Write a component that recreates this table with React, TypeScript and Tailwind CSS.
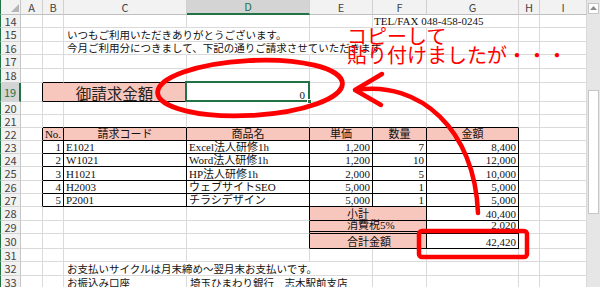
import React from 'react';

// Excel sheet: columns (row header, A..I) and rows (col header, 14..33)
const LETTERS = ['A', 'B', 'C', 'D', 'E', 'F', 'G', 'H', 'I'];

const PINK = 'bg-[#f7c6bd]';
const SERIF = "font-['Liberation_Serif','Noto_Sans_CJK_JP',serif] text-[11px] leading-[12px]";
const GOTH = 'text-[10.5px] leading-[12px] pl-[3px]';

const GR = 'border-r border-r-[#dadada]';
const GB = 'border-b border-b-[#dadada]';
const KR = 'border-r border-r-black';
const KB = 'border-b border-b-black';
const NR = 'border-r border-r-transparent';

type Spec = { t?: React.ReactNode; r?: string; b?: string; x?: string; span?: number };

function Row({ n, cells = {} }: { n: number; cells?: Record<string, Spec> }) {
  const sel = n === 19;
  const out: React.ReactNode[] = [];
  out.push(
    <div
      key="rn"
      className={`flex items-center justify-center border-l border-l-[#217346] border-b border-b-[#d4d4d4] text-[11px] leading-none ${
        sel
          ? 'bg-[#d4d4d4] text-[#217346] border-r-2 border-r-[#217346]'
          : 'bg-[#f2f2f2] text-[#444] border-r border-r-[#c6c6c6]'
      }`}
    >
      {n}
    </div>
  );
  let skip = 0;
  LETTERS.forEach((L) => {
    if (skip > 0) {
      skip--;
      return;
    }
    const s = cells[L] ?? {};
    if (s.span) skip = s.span - 1;
    out.push(
      <div key={L} className={`flex items-end whitespace-nowrap ${s.r ?? GR} ${s.b ?? GB} ${s.x ?? ''}`}>
        {s.t}
      </div>
    );
  });
  return <>{out}</>;
}

const head = `${PINK} justify-center ${SERIF}`;
const num = `justify-end pr-[2px] ${SERIF}`;
const txt = `pl-[2px] ${SERIF}`;

const items = [
  ['1', 'E1021', 'Excel法人研修1h', '1,200', '7', '8,400'],
  ['2', 'W1021', 'Word法人研修1h', '1,200', '10', '12,000'],
  ['3', 'H1021', 'HP法人研修1h', '2,000', '5', '10,000'],
  ['4', 'H2003', 'ウェブサイトSEO', '5,000', '1', '5,000'],
  ['5', 'P2001', 'チラシデザイン', '5,000', '1', '5,000'],
];

export default function App() {
  return (
    <div className="relative w-[600px] h-[287px] overflow-hidden bg-white flex font-['Noto_Sans_CJK_JP',sans-serif] text-[#111]">
      <div className="w-[587px] shrink-0 grid grid-cols-[21px_22px_21px_123px_123px_63px_54px_92px_21px_47px] grid-rows-[15px_13px_14px_13px_14px_14px_19px_13px_13px_13px_13px_13px_14px_13px_13px_14px_13px_15px_13px_14px_14px]">
        {/* column headers */}
        <div className="relative bg-[#f2f2f2] border-l border-l-[#217346] border-r border-r-[#c6c6c6] border-b border-b-[#c0c0c0]">
          <svg className="absolute left-0 top-0" width="20" height="14">
            <polygon points="18,4 18,12 10,12" fill="#b5b5b5" />
          </svg>
        </div>
        {LETTERS.map((L) => (
          <div
            key={L}
            className={`flex items-center justify-center text-[11px] leading-none border-r border-r-[#d0d0d0] ${
              L === 'D'
                ? 'bg-[#d4d4d4] text-[#217346] border-b-2 border-b-[#217346]'
                : 'bg-[#f2f2f2] text-[#444] border-b border-b-[#c0c0c0]'
            }`}
          >
            {L}
          </div>
        ))}

        <Row n={14} cells={{ F: { t: 'TEL/FAX 048-458-0245', r: NR, x: `pl-[1px] ${SERIF}` } }} />
        <Row n={15} cells={{ C: { t: 'いつもご利用いただきありがとうございます。', r: NR, x: GOTH } }} />
        <Row
          n={16}
          cells={{
            C: { t: '今月ご利用分につきまして、下記の通りご請求させていただきます', r: NR, x: GOTH },
            D: { r: NR },
            E: { r: NR },
          }}
        />
        <Row n={17} />
        <Row n={18} cells={{ B: { b: KB }, C: { b: KB } }} />
        <Row
          n={19}
          cells={{
            A: { r: KR },
            B: {
              span: 2,
              t: '御請求金額',
              r: KR,
              b: KB,
              x: `col-span-2 ${PINK} justify-center items-center text-[15.5px] leading-[16px] text-[#222]`,
            },
            D: {
              t: (
                <>
                  0
                  <span className="absolute left-[-2px] top-[-2px] right-[-1px] bottom-[-1px] border-2 border-[#217346]" />
                  <span className="absolute right-[-3px] bottom-[-3px] w-[5px] h-[5px] bg-[#217346] border border-white" />
                </>
              ),
              x: `relative justify-end pr-[4px] ${SERIF}`,
            },
          }}
        />
        <Row n={20} />
        <Row
          n={21}
          cells={{ B: { b: KB }, C: { b: KB }, D: { b: KB }, E: { b: KB }, F: { b: KB }, G: { b: KB } }}
        />
        <Row
          n={22}
          cells={{
            A: { r: KR },
            B: { t: 'No.', r: KR, b: KB, x: head },
            C: { t: '請求コード', r: KR, b: KB, x: head },
            D: { t: '商品名', r: KR, b: KB, x: head },
            E: { t: '単価', r: KR, b: KB, x: head },
            F: { t: '数量', r: KR, b: KB, x: head },
            G: { t: '金額', r: KR, b: KB, x: head },
          }}
        />
        {items.map((it, i) => (
          <Row
            key={i}
            n={23 + i}
            cells={{
              A: { r: KR },
              B: { t: it[0], r: KR, b: KB, x: num },
              C: { t: it[1], r: KR, b: KB, x: txt },
              D: { t: it[2], r: KR, b: KB, x: txt },
              E: { t: it[3], r: KR, b: KB, x: num },
              F: { t: it[4], r: KR, b: KB, x: num },
              G: { t: it[5], r: KR, b: KB, x: num },
            }}
          />
        ))}
        <Row
          n={28}
          cells={{
            D: { r: KR },
            E: { span: 2, t: '小計', r: KR, b: KB, x: `col-span-2 ${PINK} pl-[37px] ${SERIF}` },
            G: { t: '40,400', r: KR, b: KB, x: num },
          }}
        />
        <Row
          n={29}
          cells={{
            D: { r: KR },
            E: {
              span: 2,
              t: '消費税5%',
              r: KR,
              b: 'border-b-[3px] border-double border-b-black',
              x: `col-span-2 ${PINK} pl-[37px] ${SERIF}`,
            },
            G: { t: '2,020', r: KR, b: 'border-b-[3px] border-double border-b-black', x: num },
          }}
        />
        <Row
          n={30}
          cells={{
            D: { r: KR },
            E: { span: 2, t: '合計金額', r: KR, b: KB, x: `col-span-2 ${PINK} pl-[37px] ${SERIF}` },
            G: { t: '42,420', r: KR, b: KB, x: num },
          }}
        />
        <Row n={31} />
        <Row
          n={32}
          cells={{
            C: { t: 'お支払いサイクルは月末締め～翌月末お支払いです。', r: NR, x: GOTH },
            D: { r: NR },
          }}
        />
        <Row
          n={33}
          cells={{
            C: { t: 'お振込み口座', x: GOTH },
            D: { t: '埼玉ひまわり銀行　志木駅前支店', r: NR, x: GOTH },
          }}
        />
      </div>

      {/* vertical scrollbar */}
      <div className="w-[13px] shrink-0 bg-[#e6e6e6] flex flex-col items-center pt-[3px]">
        <div className="w-[11px] h-[11px] bg-white border border-[#c6c6c6] flex items-center justify-center">
          <svg width="7" height="5">
            <polygon points="3.5,0 7,4 0,4" fill="#8a8a8a" />
          </svg>
        </div>
        <div className="mt-[76px] w-[11px] h-[124px] bg-white border border-[#c6c6c6]" />
      </div>

      {/* red annotations */}
      <svg className="absolute inset-0 pointer-events-none" width="600" height="287">
        <ellipse
          cx="250"
          cy="88"
          rx="92.5"
          ry="27.5"
          transform="rotate(-3 250 88)"
          fill="none"
          stroke="#ff0000"
          strokeWidth="4.8"
        />
        <path d="M 356 90 C 420 80, 475 130, 478 213" fill="none" stroke="#ff0000" strokeWidth="4.5" strokeLinecap="round" />
        <polyline
          points="382,74 355,90 381,105"
          fill="none"
          stroke="#ff0000"
          strokeWidth="4.5"
          strokeLinecap="round"
          strokeLinejoin="round"
        />
        <rect x="419" y="231" width="108" height="26" rx="3" fill="none" stroke="#ff0000" strokeWidth="4.5" />
      </svg>
      <div className="absolute left-[347px] top-[26px] text-[20px] leading-[19px] text-[#ff0000] whitespace-nowrap">
        コピーして
        <br />
        貼り付けましたが・・・
      </div>
    </div>
  );
}
